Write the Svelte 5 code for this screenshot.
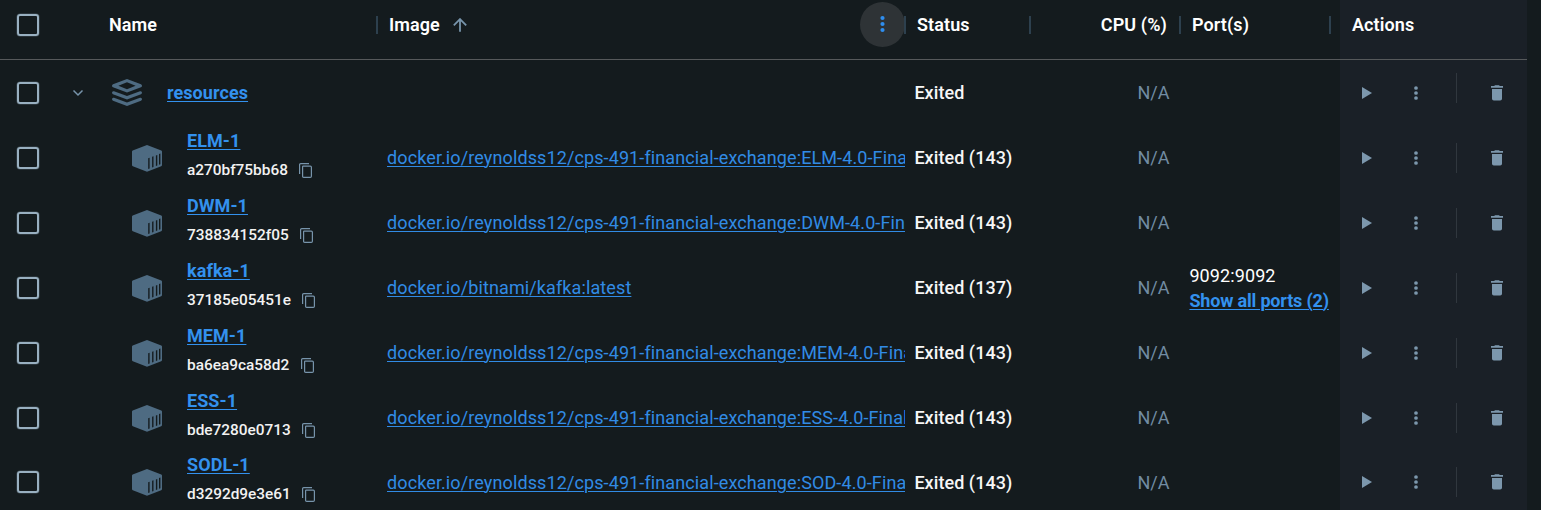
<script>
  const repo = 'docker.io/reynoldss12/cps-491-financial-exchange:';
  const containers = [
    { name: 'ELM-1', id: 'a270bf75bb68', image: repo + 'ELM-4.0-Final', code: 143 },
    { name: 'DWM-1', id: '738834152f05', image: repo + 'DWM-4.0-Final', code: 143 },
    { name: 'kafka-1', id: '37185e05451e', image: 'docker.io/bitnami/kafka:latest', code: 137, port: '9092:9092' },
    { name: 'MEM-1', id: 'ba6ea9ca58d2', image: repo + 'MEM-4.0-Final', code: 143 },
    { name: 'ESS-1', id: 'bde7280e0713', image: repo + 'ESS-4.0-Final', code: 143 },
    { name: 'SODL-1', id: 'd3292d9e3e61', image: repo + 'SOD-4.0-Final', code: 143 }
  ];
</script>

{#snippet checkbox()}
  <div class="check"><span class="box"></span></div>
{/snippet}

{#snippet actions()}
  <div class="actions">
    <svg class="play" width="10" height="12" viewBox="0 0 10 12"><path d="M0 0 10 6 0 12Z" /></svg>
    <svg class="more" width="4" height="14" viewBox="0 0 4 14"><circle cx="2" cy="2" r="1.85" /><circle cx="2" cy="7" r="1.85" /><circle cx="2" cy="12" r="1.85" /></svg>
    <span class="rule"></span>
    <svg class="trash" width="12" height="16" viewBox="0 0 12 16"><path d="M3.2.9 4 .2h4l.8.7H12v1.8H0V.9ZM1 4h10v9.8q0 1.8-1.8 1.8H2.8Q1 15.6 1 13.8Z" /></svg>
  </div>
{/snippet}

<div class="table">
  <div class="row head">
    {@render checkbox()}
    <div class="cell h-name">Name<i class="sep"></i></div>
    <div class="cell h-image">
      Image
      <svg class="sort" width="14" height="14" viewBox="0 0 14 14"><path d="M7 13.7V1.3M.8 7.3 7 1.1 13.2 7.3" /></svg>
      <span class="menu"><svg width="6" height="18" viewBox="0 0 6 18"><circle cx="2.5" cy="3" r="2.1" /><circle cx="2.5" cy="9" r="2.1" /><circle cx="2.5" cy="15" r="2.1" /></svg></span>
      <i class="sep"></i>
    </div>
    <div class="cell h-status">Status<i class="sep"></i></div>
    <div class="cell h-cpu">CPU (%)<i class="sep"></i></div>
    <div class="cell h-ports">Port(s)<i class="sep last"></i></div>
    <div class="cell h-actions">Actions</div>
  </div>

  <div class="row group">
    {@render checkbox()}
    <div class="cell">
      <svg class="chevron" width="12" height="8" viewBox="0 0 12 8"><path d="M1.5 1.5 6 6 10.5 1.5" /></svg>
      <svg class="stack" width="30" height="27" viewBox="0 0 30 27">
        <path fill-rule="evenodd" d="M15 0 29 5.2Q30 5.7 30 6.8T29 8.3L15 13.5 1 8.3Q0 7.8 0 6.8T1 5.2ZM15 3.2 6.4 6.7 15 10.2 23.6 6.7Z" />
        <path d="M0 13.8Q0 11.8 2 12.3L15 17 28 12.3Q30 11.8 30 13.8 30 14.8 29 15.2L15 20.4 1 15.2Q0 14.8 0 13.8Z" />
        <path d="M0 20.3Q0 18.3 2 18.8L15 23.5 28 18.8Q30 18.3 30 20.3 30 21.3 29 21.7L15 26.9 1 21.7Q0 21.3 0 20.3Z" />
      </svg>
      <a class="strong" href="#resources">resources</a>
    </div>
    <div class="cell"></div>
    <div class="cell status">Exited</div>
    <div class="cell cpu">N/A</div>
    <div class="cell"></div>
    {@render actions()}
  </div>

  {#each containers as c}
    <div class="row">
      {@render checkbox()}
      <div class="cell">
        <svg class="cube" width="30" height="27" viewBox="0 0 30 27">
          <path fill-rule="evenodd" d="M15 0 29.3 5.4Q30 5.8 30 6.6V20Q30 20.9 29.2 21.2L15 26.8.8 21.2Q0 20.9 0 20V6.6Q0 5.8.7 5.4ZM16.2 13.3V23.9L17.6 23.4V12.8ZM20.1 11.8V22.5L21.5 22V11.3ZM23.9 10.4V21.1L25.3 20.6V9.9ZM27 8.9V19.8L28.4 19.3V8.4Z" />
        </svg>
        <div class="ident">
          <a class="strong" href="#{c.name}">{c.name}</a>
          <div class="id">{c.id}
            <svg width="13" height="15" viewBox="0 0 13 15"><path d="M.6 11V1.7Q.6.6 1.7.6H10M4.2 3.2H11.3Q12.4 3.2 12.4 4.3V13.3Q12.4 14.4 11.3 14.4H4.7Q3.6 14.4 3.6 13.3V3.8Q3.6 3.2 4.2 3.2Z" /></svg>
          </div>
        </div>
      </div>
      <div class="cell image"><a href="#{c.id}">{c.image}</a></div>
      <div class="cell status">Exited ({c.code})</div>
      <div class="cell cpu">N/A</div>
      <div class="cell ports">
        {#if c.port}
          <span>{c.port}</span>
          <a class="strong" href="#ports">Show all ports (2)</a>
        {/if}
      </div>
      {@render actions()}
    </div>
  {/each}
</div>

<style>
  :global(body) { background: #141b1e; overflow: hidden; }
  .table { width: 1527px; height: 510px; overflow: hidden; font: 400 18px/26px Roboto, sans-serif; color: #fff; }
  .row { display: grid; grid-template-columns: 56px 321px 528px 125px 150px 160px 187px; height: 65px; }
  .head { height: 59px; border-bottom: 1px solid #56595b; font-weight: 600; letter-spacing: .1px; }
  .row:last-child { margin-top: -1px; }
  .row:last-child .cell:not(:nth-child(2)) { padding-top: 2px; }
  .cell { display: flex; align-items: center; min-width: 0; white-space: nowrap; }
  .head .cell { position: relative; padding-bottom: 9px; }
  .check { display: flex; align-items: center; padding-left: 17px; }
  .head .check { padding-bottom: 9px; }
  .box { box-sizing: border-box; width: 22px; height: 22px; border: 2px solid #99b0c1; border-radius: 3px; box-shadow: 0 0 0 .5px #99b0c155; }
  .sep { position: absolute; right: -1px; top: 16px; width: 2px; height: 18px; background: #2d404e; }
  .sep.last { right: 9px; }
  .h-name { padding-left: 53px; }
  .h-image { padding-left: 12px; }
  .h-status { padding-left: 12px; }
  .h-cpu { justify-content: flex-end; padding-right: 13px; }
  .h-ports { padding-left: 12px; }
  .h-actions { padding-left: 12px; background: #1a2027; }
  .sort { margin-left: 13px; fill: none; stroke: #7794ab; stroke-width: 1.8; }
  .menu { display: flex; align-items: center; justify-content: center; width: 45px; height: 45px; margin: 0 0 0 auto; border-radius: 50%; background: #2e3336; fill: #2f8eee; position: relative; top: -1px; }
  .chevron { margin-left: 16px; fill: none; stroke: #7794ab; stroke-width: 1.5; }
  .stack { margin: 0 25px 0 28px; fill: #4e6b82; }
  .cube { margin: 1px 25px 0 76px; fill: #4e6b82; }
  a { color: #318be5; text-decoration: underline; text-underline-offset: 2px; text-decoration-thickness: 1px; }
  .strong { color: #3391ee; font-weight: 700; letter-spacing: .07px; }
  .ident { display: flex; flex-direction: column; padding-bottom: 7px; }
  .id { display: flex; align-items: center; margin-top: 5px; font-size: 15.4px; line-height: 22px; font-weight: 500; color: #f2f2f2; }
  .id svg { margin: 1px 0 0 11.5px; fill: none; stroke: #7794ab; stroke-width: 1.2; }
  .image { padding-left: 10px; overflow: hidden; letter-spacing: .11px; }
  .status { padding-left: 9.4px; color: #f6f6f6; font-weight: 500; letter-spacing: .06px; }
  .cpu { justify-content: flex-end; padding-right: 10.6px; color: #718ca3; }
  .ports { flex-direction: column; align-items: flex-start; justify-content: center; padding-left: 9.4px; line-height: 25px; letter-spacing: .1px; }
  .ports .strong { letter-spacing: -.18px; }
  .actions { display: flex; align-items: center; background: #1a2027; fill: #7c97ad; }
  .play { margin-left: 22px; }
  .more { margin-left: 42px; }
  .rule { width: 1px; height: 30px; margin-left: 38px; background: #30373e; }
  .group .rule { margin-bottom: 10px; }
  .trash { margin-left: 34px; }
</style>
